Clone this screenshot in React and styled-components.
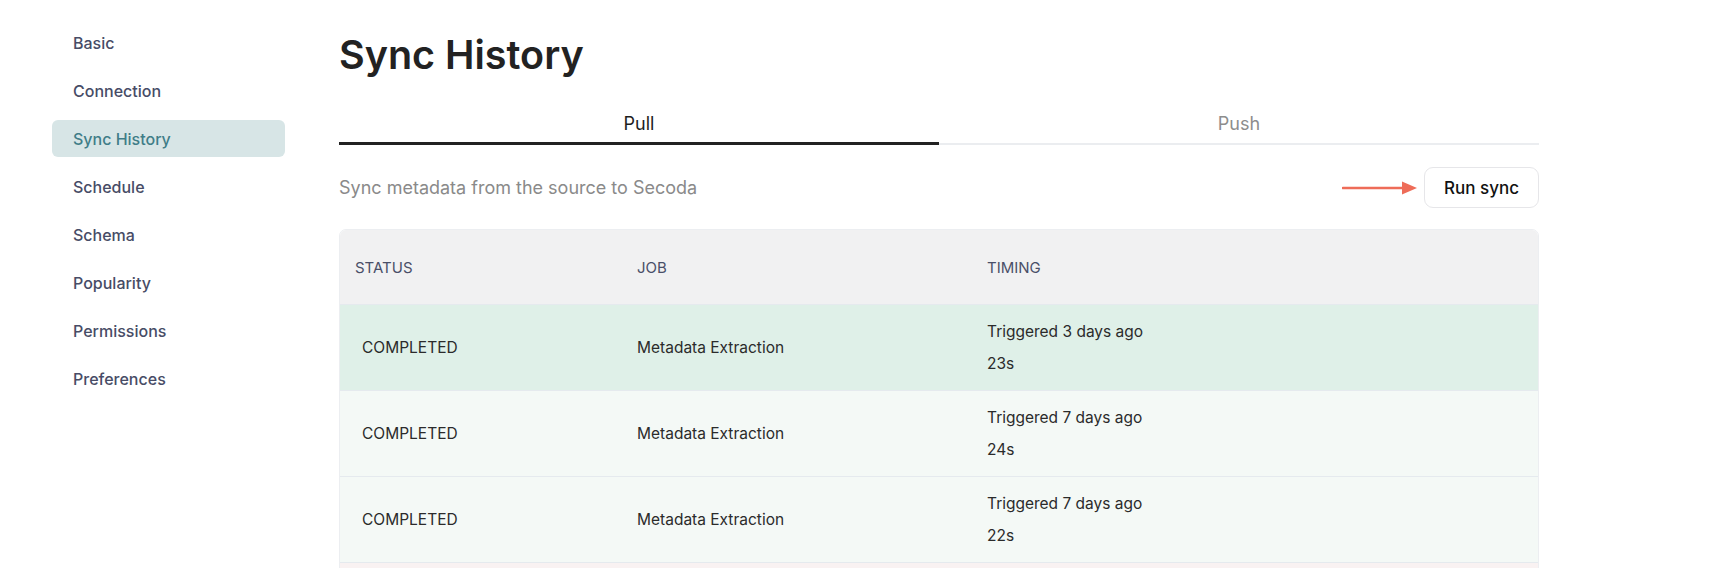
import React from "react";
import styled, { createGlobalStyle } from "styled-components";

const GlobalStyle = createGlobalStyle`
  html, body {
    margin: 0;
    padding: 0;
    background: #ffffff;
    overflow: hidden;
  }
  body {
    font-family: Inter, "Noto Sans", "Liberation Sans", sans-serif;
    -webkit-font-smoothing: antialiased;
  }
  * { box-sizing: border-box; }
`;

const Layout = styled.div`
  display: flex;
  align-items: flex-start;
  width: 1720px;
  height: 568px;
  overflow: hidden;
`;

const Sidebar = styled.nav`
  display: flex;
  flex-direction: column;
  gap: 11px;
  width: 233px;
  margin-left: 52px;
  padding-top: 24px;
  flex-shrink: 0;
`;

const NavItem = styled.div`
  height: 37px;
  display: flex;
  align-items: center;
  padding-left: 21px;
  border-radius: 6px;
  font-size: 16px;
  font-weight: 500;
  color: ${(p) => (p.$active ? "#3f7d88" : "#474c66")};
  background: ${(p) => (p.$active ? "#d7e5e6" : "transparent")};
`;

const Main = styled.main`
  width: 1200px;
  margin-left: 54px;
  padding-top: 33px;
  display: flex;
  flex-direction: column;
`;

const Title = styled.h1`
  margin: 0;
  font-size: 39.5px;
  line-height: 44px;
  font-weight: 600;
  color: #222222;
`;

const TabList = styled.div`
  display: grid;
  grid-template-columns: 1fr 1fr;
  margin-top: 24px;
  border-bottom: 2px solid #ebedf0;
`;

const Tab = styled.div`
  display: flex;
  justify-content: center;
  align-items: center;
  height: 44px;
  padding-top: 4px;
  font-size: 18px;
  color: ${(p) => (p.$active ? "#1e1e1e" : "#8d8d8d")};
  border-bottom: 3px solid ${(p) => (p.$active ? "#222222" : "transparent")};
  margin-bottom: -2px;
`;

const ActionRow = styled.div`
  display: flex;
  align-items: center;
  justify-content: space-between;
  margin-top: 22px;
`;

const Description = styled.p`
  margin: 0;
  font-size: 18px;
  color: #8a8a8a;
`;

const ActionGroup = styled.div`
  display: flex;
  align-items: center;
  gap: 6px;
`;

const RunButton = styled.button`
  height: 41px;
  width: 115px;
  border: 1px solid #e6e6e9;
  border-radius: 9px;
  background: #ffffff;
  font-family: inherit;
  font-size: 17px;
  font-weight: 500;
  color: #111111;
  cursor: pointer;
`;

const Table = styled.div`
  margin-top: 21px;
  border: 1px solid #eceef1;
  border-radius: 7px;
  overflow: hidden;
`;

const Row = styled.div`
  display: grid;
  grid-template-columns: 282px 350px 1fr;
  align-items: center;
  height: ${(p) => (p.$header ? "74px" : "86px")};
  background: ${(p) => p.$bg};
  border-top: ${(p) => (p.$header ? "none" : "1px solid #e5eaee")};
`;

const HeadCell = styled.div`
  padding-left: 15px;
  font-size: 15px;
  color: #4a4f68;
  text-transform: uppercase;
`;

const StatusCell = styled.div`
  padding-left: 22px;
  font-size: 15.5px;
  color: #2b2b2b;
`;

const Cell = styled.div`
  padding-left: 15px;
  font-size: 15.5px;
  color: #2b2b2b;
`;

const TimingCell = styled.div`
  padding-left: 15px;
  display: flex;
  flex-direction: column;
  gap: 10px;
  font-size: 15.5px;
  line-height: 22px;
  color: #2b2b2b;
`;

const Arrow = () => (
  <svg width="76" height="16" viewBox="0 0 76 16" aria-hidden="true">
    <line x1="1" y1="8" x2="62" y2="8" stroke="#ee6c58" strokeWidth="2.6" strokeLinecap="round" />
    <polygon points="60,1.5 75,8 60,14.5" fill="#ee6c58" />
  </svg>
);

const navItems = [
  "Basic",
  "Connection",
  "Sync History",
  "Schedule",
  "Schema",
  "Popularity",
  "Permissions",
  "Preferences",
];

const rows = [
  { status: "COMPLETED", job: "Metadata Extraction", when: "Triggered 3 days ago", dur: "23s", bg: "#dff0e8" },
  { status: "COMPLETED", job: "Metadata Extraction", when: "Triggered 7 days ago", dur: "24s", bg: "#f4f9f6" },
  { status: "COMPLETED", job: "Metadata Extraction", when: "Triggered 7 days ago", dur: "22s", bg: "#f4f9f6" },
];

export default function App() {
  return (
    <>
      <GlobalStyle />
      <Layout>
        <Sidebar>
          {navItems.map((n) => (
            <NavItem key={n} $active={n === "Sync History"}>
              {n}
            </NavItem>
          ))}
        </Sidebar>
        <Main>
          <Title>Sync History</Title>
          <TabList>
            <Tab $active>Pull</Tab>
            <Tab>Push</Tab>
          </TabList>
          <ActionRow>
            <Description>Sync metadata from the source to Secoda</Description>
            <ActionGroup>
              <Arrow />
              <RunButton>Run sync</RunButton>
            </ActionGroup>
          </ActionRow>
          <Table>
            <Row $header $bg="#f1f1f2">
              <HeadCell>Status</HeadCell>
              <HeadCell>Job</HeadCell>
              <HeadCell>Timing</HeadCell>
            </Row>
            {rows.map((r, i) => (
              <Row key={i} $bg={r.bg}>
                <StatusCell>{r.status}</StatusCell>
                <Cell>{r.job}</Cell>
                <TimingCell>
                  <span>{r.when}</span>
                  <span>{r.dur}</span>
                </TimingCell>
              </Row>
            ))}
            <Row $bg="#f9f2f2" />
          </Table>
        </Main>
      </Layout>
    </>
  );
}
